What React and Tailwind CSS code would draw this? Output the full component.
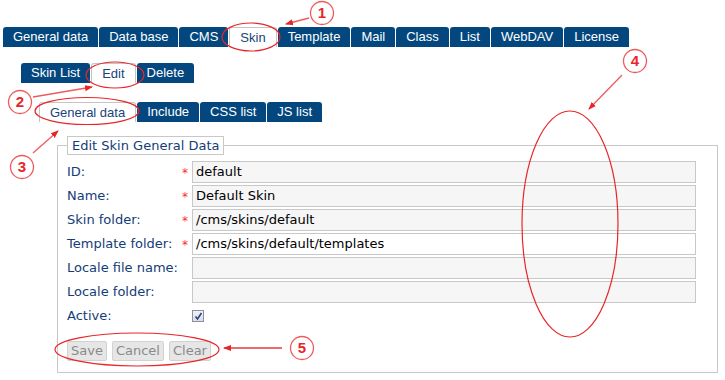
import React from 'react';

const topTabs = ['General data', 'Data base', 'CMS', 'Skin', 'Template', 'Mail', 'Class', 'List', 'WebDAV', 'License'];
const skinTabs = ['Skin List', 'Edit', 'Delete'];
const editTabs = ['General data', 'Include', 'CSS list', 'JS list'];

const fields = [
  { label: 'ID:', value: 'default', required: true, readOnly: true },
  { label: 'Name:', value: 'Default Skin', required: true, readOnly: true },
  { label: 'Skin folder:', value: '/cms/skins/default', required: true, readOnly: true },
  { label: 'Template folder:', value: '/cms/skins/default/templates', required: true, readOnly: false },
  { label: 'Locale file name:', value: '', required: false, readOnly: true },
  { label: 'Locale folder:', value: '', required: false, readOnly: true },
];

function Tab({ label, active }) {
  return (
    <div
      className={
        active
          ? 'h-[20px] px-[10px] flex items-center bg-white border border-b-0 border-[#c4c4c4] rounded-t-[3px] text-[#17457a]'
          : 'h-[20px] px-[10px] flex items-center bg-[#04477e] text-white rounded-t-[3px]'
      }
    >
      {label}
    </div>
  );
}

function TabRow({ tabs, active, className }) {
  return (
    <div className={`flex gap-[1px] text-[13px] font-['Liberation_Sans',Arial,sans-serif] ${className}`}>
      {tabs.map((t) => (
        <Tab key={t} label={t} active={t === active} />
      ))}
    </div>
  );
}

function Annotations() {
  const red = '#e8262a';
  const Num = ({ cx, cy, n }) => (
    <g>
      <circle cx={cx} cy={cy} r="11.5" fill="white" stroke="#ef5a5c" strokeWidth="1.3" />
      <text x={cx} y={cy + 5} textAnchor="middle" fontSize="15" fontWeight="bold" fill={red} fontFamily="Liberation Sans, Arial, sans-serif">
        {n}
      </text>
    </g>
  );
  return (
    <svg className="absolute inset-0 pointer-events-none" width="725" height="380" viewBox="0 0 725 380">
      <defs>
        <marker id="ah" markerWidth="8" markerHeight="8" refX="7" refY="4" orient="auto" markerUnits="userSpaceOnUse">
          <path d="M0,1 L8,4 L0,7 z" fill={red} />
        </marker>
      </defs>
      <g fill="none" stroke={red} strokeWidth="1.2">
        <ellipse cx="251" cy="37" rx="29" ry="14" />
        <ellipse cx="115" cy="75" rx="29" ry="13" />
        <ellipse cx="87" cy="111" rx="52" ry="13.5" />
        <ellipse cx="570" cy="224" rx="48" ry="113" />
        <ellipse cx="137" cy="349.5" rx="82" ry="16.5" />
      </g>
      <g stroke="#ef5a5c" strokeWidth="1.3" fill="none" markerEnd="url(#ah)">
        <line x1="309" y1="18" x2="286" y2="24" />
        <line x1="33" y1="97" x2="92" y2="87" />
        <line x1="33" y1="153" x2="58" y2="131" />
        <line x1="622" y1="75" x2="589" y2="109" />
      </g>
      <line x1="282" y1="348" x2="224" y2="348" stroke="#ef6a6c" strokeWidth="2.2" markerEnd="url(#ah)" />
      <Num cx={322} cy={13} n="1" />
      <Num cx={20} cy={102} n="2" />
      <Num cx={22} cy={167} n="3" />
      <Num cx={635} cy={61} n="4" />
      <Num cx={302} cy={348} n="5" />
    </svg>
  );
}

export default function App() {
  return (
    <div className="relative w-[725px] h-[380px] bg-white overflow-hidden font-['DejaVu_Sans',Verdana,sans-serif] text-[13px]">
      <div className="pt-[27px] pl-[3px]">
        <TabRow tabs={topTabs} active="Skin" />
        <TabRow tabs={skinTabs} active="Edit" className="mt-[16px] ml-[18px]" />
        <TabRow tabs={editTabs} active="General data" className="mt-[19px] ml-[36px]" />

        <fieldset className="ml-[54px] mt-[14px] w-[661px] h-[237px] border border-[#c8c8c8] pl-[9px] pr-[21px]">
          <legend className="border border-[#c8c8c8] px-[4px] h-[19px] leading-[17px] text-[#143c78]">
            Edit Skin General Data
          </legend>
          <div className="flex flex-col gap-[2px] mt-[6px]">
            {fields.map((f) => (
              <div key={f.label} className="flex items-center h-[22px]">
                <div className="w-[115px] text-[#143c78]">{f.label}</div>
                <div className="w-[10px] text-[#ff2a2a] text-[12px] leading-none pt-[2px]">{f.required ? '*' : ''}</div>
                <div
                  className={`flex-1 h-[22px] border border-[#c8c8c8] px-[3px] flex items-center text-black ${
                    f.readOnly ? 'bg-[#f6f6f6]' : 'bg-white'
                  }`}
                >
                  {f.value}
                </div>
              </div>
            ))}
            <div className="flex items-center h-[22px]">
              <div className="w-[125px] text-[#143c78]">Active:</div>
              <div className="w-[12px] h-[12px] border border-[#8c8fa0] bg-gradient-to-b from-[#f2f2f2] to-[#dcdde2] flex items-center justify-center">
                <svg width="9" height="9" viewBox="0 0 9 9">
                  <path d="M1.5 4.5 L3.5 7 L7.5 1" fill="none" stroke="#2b3f8a" strokeWidth="1.6" />
                </svg>
              </div>
            </div>
          </div>
          <div className="flex gap-[5px] mt-[14px]">
            {['Save', 'Cancel', 'Clear'].map((b) => (
              <div
                key={b}
                className="h-[20px] px-[3px] flex items-center bg-[#e6e6e6] border border-[#d2d2d2] rounded-[2px] text-[#8a8a8a]"
              >
                {b}
              </div>
            ))}
          </div>
        </fieldset>
      </div>
      <Annotations />
    </div>
  );
}
